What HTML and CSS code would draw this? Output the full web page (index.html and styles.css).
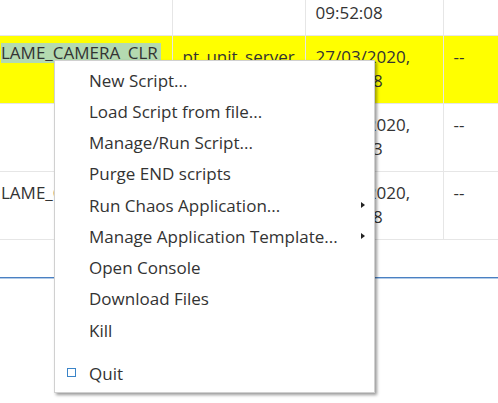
FILE: index.html
```html
<!DOCTYPE html>
<html>
<head>
<meta charset="utf-8">
<link rel="stylesheet" href="styles.css">
</head>
<body>
<div class="view">
  <table class="grid">
    <colgroup>
      <col class="c1"><col class="c2"><col class="c3"><col class="c4">
    </colgroup>
    <tr class="short">
      <td class="first"></td>
      <td></td>
      <td>09:52:08</td>
      <td></td>
    </tr>
    <tr class="hl">
      <td class="first"><span class="sel">LAME_CAMERA_CLR</span></td>
      <td>pt_unit_server</td>
      <td>27/03/2020,<br>09:52:08</td>
      <td>--</td>
    </tr>
    <tr>
      <td class="first"></td>
      <td></td>
      <td>27/03/2020,<br>09:52:13</td>
      <td>--</td>
    </tr>
    <tr>
      <td class="first">LAME_CAMERA_CLR</td>
      <td></td>
      <td>27/03/2020,<br>09:52:18</td>
      <td>--</td>
    </tr>
  </table>
  <div class="divider"></div>
</div>

<ul class="menu">
  <li class="item">New Script...</li>
  <li class="item">Load Script from file...</li>
  <li class="item">Manage/Run Script...</li>
  <li class="item">Purge END scripts</li>
  <li class="item sub">Run Chaos Application...<span class="arrow"></span></li>
  <li class="item sub">Manage Application Template...<span class="arrow"></span></li>
  <li class="item">Open Console</li>
  <li class="item">Download Files</li>
  <li class="item">Kill</li>
  <li class="sep"></li>
  <li class="item"><span class="check"></span>Quit</li>
</ul>
</body>
</html>
```

FILE: styles.css
```css
html, body {
  margin: 0;
  padding: 0;
  background: #ffffff;
}
body {
  font-family: "Open Sans", "Noto Sans", sans-serif;
  color: #333333;
  width: 498px;
  height: 403px;
  overflow: hidden;
  position: relative;
}
.view {
  overflow: hidden;
  height: 403px;
}
.grid {
  border-collapse: collapse;
  table-layout: fixed;
  width: 520px;
  margin-top: -8px;
  font-size: 17px;
}
.c1 { width: 172px; }
.c2 { width: 133px; }
.c3 { width: 138px; }
.c4 { width: 77px; }
.grid td {
  height: 48px;
  padding: 9px 10px 10px 10px;
  line-height: 24px;
  vertical-align: top;
  border-bottom: 1px solid #e6e6e6;
  border-left: 1px solid #e6e6e6;
  white-space: nowrap;
  overflow: hidden;
}
.grid .short td {
  height: 24px;
}
.grid td.first {
  border-left: none;
  padding-left: 1px;
}
.hl td {
  background: #ffff00;
}
.sel {
  display: inline-block;
  background: #b4dab0;
  line-height: 20px;
  padding-right: 3px;
  margin-top: -2px;
  vertical-align: top;
}
.divider {
  margin-top: 37px;
  height: 2px;
  background: linear-gradient(#4a80c2 0 50%, #b3cbe8 50% 100%);
}
.menu {
  position: absolute;
  left: 54px;
  top: 60px;
  width: 321px;
  height: 333px;
  box-sizing: border-box;
  margin: 0;
  padding: 3.5px 0 0 0;
  list-style: none;
  background: #ffffff;
  border: 1px solid #d0d0d0;
  box-shadow: 2px 2px 3px rgba(0, 0, 0, 0.4);
  font-size: 17px;
  color: #333333;
}
.item {
  position: relative;
  height: 31.25px;
  line-height: 31.25px;
  padding-left: 34px;
  white-space: nowrap;
}
.sep {
  height: 12px;
}
.arrow {
  position: absolute;
  left: 306px;
  top: 12px;
  width: 0;
  height: 0;
  border-left: 4px solid #222;
  border-top: 3.5px solid transparent;
  border-bottom: 3.5px solid transparent;
}
.check {
  position: absolute;
  left: 12px;
  top: 10px;
  width: 9px;
  height: 9px;
  box-sizing: border-box;
  border: 1.5px solid #3a84c8;
}
```
